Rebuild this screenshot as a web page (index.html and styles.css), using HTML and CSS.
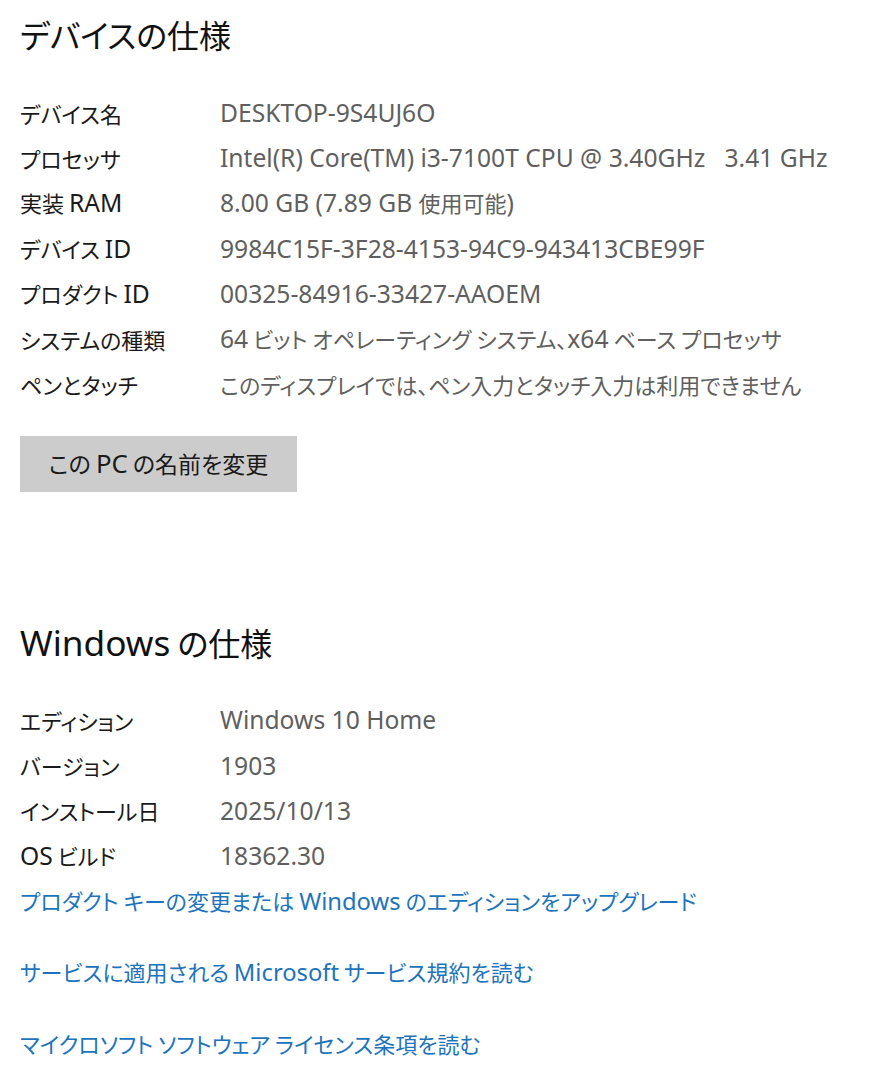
FILE: index.html
```html
<!DOCTYPE html>
<html lang="ja">
<head>
<meta charset="utf-8">
<link rel="stylesheet" href="styles.css">
</head>
<body>
<main class="page">
  <h1 class="title">デバイスの仕様</h1>
  <dl class="specs">
    <div class="row"><dt>デバイス名</dt><dd><span class="en">DESKTOP-9S4UJ6O</span></dd></div>
    <div class="row"><dt>プロセッサ</dt><dd><span class="en">Intel(R) Core(TM) i3-7100T CPU @ 3.40GHz&nbsp;&nbsp;&nbsp;3.41 GHz</span></dd></div>
    <div class="row"><dt>実装 <span class="en">RAM</span></dt><dd><span class="en">8.00 GB (7.89 GB </span>使用可能<span class="en">)</span></dd></div>
    <div class="row"><dt>デバイス <span class="en">ID</span></dt><dd><span class="en">9984C15F-3F28-4153-94C9-943413CBE99F</span></dd></div>
    <div class="row"><dt>プロダクト <span class="en">ID</span></dt><dd><span class="en">00325-84916-33427-AAOEM</span></dd></div>
    <div class="row"><dt>システムの種類</dt><dd><span class="en">64</span> ビット オペレーティング システム、<span class="en">x64</span> ベース プロセッサ</dd></div>
    <div class="row"><dt>ペンとタッチ</dt><dd>このディスプレイでは、ペン入力とタッチ入力は利用できません</dd></div>
  </dl>
  <button class="btn">この <span class="en">PC</span> の名前を変更</button>

  <h1 class="title win"><span class="en">Windows</span> の仕様</h1>
  <dl class="specs">
    <div class="row"><dt>エディション</dt><dd><span class="en">Windows 10 Home</span></dd></div>
    <div class="row"><dt>バージョン</dt><dd><span class="en">1903</span></dd></div>
    <div class="row"><dt>インストール日</dt><dd><span class="en">2025/10/13</span></dd></div>
    <div class="row"><dt><span class="en">OS</span> ビルド</dt><dd><span class="en">18362.30</span></dd></div>
  </dl>
  <div class="links">
    <a class="link">プロダクト キーの変更または <span class="en">Windows</span> のエディションをアップグレード</a>
    <a class="link">サービスに適用される <span class="en">Microsoft</span> サービス規約を読む</a>
    <a class="link">マイクロソフト ソフトウェア ライセンス条項を読む</a>
  </div>
</main>
</body>
</html>
```
FILE: styles.css
```css
html, body {
  margin: 0;
  padding: 0;
  background: #ffffff;
}
body {
  font-family: "Noto Sans CJK JP", sans-serif;
  font-feature-settings: "palt";
  color: #1a1a1a;
}
.en {
  font-family: "Noto Sans", "Noto Sans CJK JP", sans-serif;
  font-size: 1.12em;
}
.page {
  padding: 14px 20px 0 20px;
}
.title {
  margin: 0;
  font-size: 32px;
  line-height: 40px;
  font-weight: 400;
  color: #111;
}
.title .en {
  font-size: 1.1em;
}
.title.win {
  margin-top: 130px;
}
.specs {
  margin: 36px 0 0 0;
  display: flex;
  flex-direction: column;
}
.win + .specs {
  margin-top: 35px;
}
.row {
  display: grid;
  grid-template-columns: 200px auto;
  height: 45.2px;
  align-items: center;
  font-size: 22px;
}
.row dt {
  margin: 0;
  color: #1a1a1a;
}
.row dd {
  margin: 0;
  color: #5f5f5f;
  white-space: nowrap;
}
.btn {
  margin-top: 30px;
  display: block;
  width: 277px;
  height: 56px;
  border: none;
  background: #cccccc;
  font-family: inherit;
  font-feature-settings: "palt";
  font-size: 23px;
  color: #1a1a1a;
  padding: 0 0 2px 0;
}
.links {
  display: flex;
  flex-direction: column;
  gap: 25px;
}
.link {
  display: block;
  font-size: 22px;
  line-height: 45px;
  color: #1d74bd;
  text-decoration: none;
  white-space: nowrap;
}
.link .en {
  font-size: 1.08em;
}
.link + .link + .link {
  margin-top: 1px;
}
```
